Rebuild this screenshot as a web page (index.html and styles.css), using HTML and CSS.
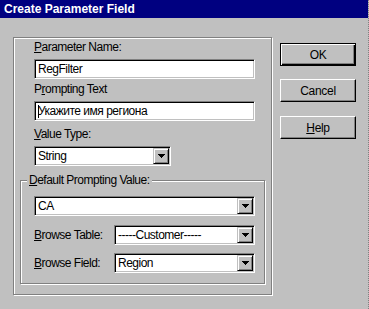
FILE: index.html
```html
<!DOCTYPE html>
<html lang="en">
<head>
  <meta charset="UTF-8" />
  <title>Create Parameter Field</title>
  <link rel="stylesheet" href="styles.css">
</head>
<body>
  <div class="window">
    <div class="titlebar">Create Parameter Field</div>

    <div class="dialog">
      <div class="frame">
        <div class="fields">
          <div class="label"><u>P</u>arameter Name:</div>
          <div class="textbox">RegFilter</div>

          <div class="label label-2">P<u>r</u>ompting Text</div>
          <div class="textbox"><span class="caret"></span>Укажите имя региона</div>

          <div class="label label-3"><u>V</u>alue Type:</div>
          <div class="combo combo-type">
            <span class="combo-value">String</span>
            <span class="combo-btn">
              <svg class="arrow" viewBox="0 0 7 4" width="7" height="4"><path d="M0 0h7v1H0zM1 1h5v1H1zM2 2h3v1H2zM3 3h1v1H3z"/></svg>
            </span>
          </div>
        </div>

        <!-- Default Prompting Value -->
        <div class="group">
          <div class="group-title"><u>D</u>efault Prompting Value:</div>

          <div class="combo combo-default">
            <span class="combo-value">CA</span>
            <span class="combo-btn">
              <svg class="arrow" viewBox="0 0 7 4" width="7" height="4"><path d="M0 0h7v1H0zM1 1h5v1H1zM2 2h3v1H2zM3 3h1v1H3z"/></svg>
            </span>
          </div>

          <div class="browse-row browse-table">
            <span class="browse-label"><u>B</u>rowse Table:</span>
            <div class="combo combo-browse">
              <span class="combo-value">-----Customer-----</span>
              <span class="combo-btn">
                <svg class="arrow" viewBox="0 0 7 4" width="7" height="4"><path d="M0 0h7v1H0zM1 1h5v1H1zM2 2h3v1H2zM3 3h1v1H3z"/></svg>
              </span>
            </div>
          </div>

          <div class="browse-row browse-field">
            <span class="browse-label"><u>B</u>rowse Field:</span>
            <div class="combo combo-browse">
              <span class="combo-value">Region</span>
              <span class="combo-btn">
                <svg class="arrow" viewBox="0 0 7 4" width="7" height="4"><path d="M0 0h7v1H0zM1 1h5v1H1zM2 2h3v1H2zM3 3h1v1H3z"/></svg>
              </span>
            </div>
          </div>
        </div>
      </div>

      <div class="buttons">
        <button class="btn btn-default">OK</button>
        <button class="btn">Cancel</button>
        <button class="btn btn-help"><u>H</u>elp</button>
      </div>
    </div>
  </div>
</body>
</html>
```

FILE: styles.css
```css
:root {
  --face: #c0c0c0;
  --shadow: #808080;
  --light: #ffffff;
  --dark: #000000;
  --title: #000080;
  --font-ui: "Liberation Sans", Arial, sans-serif;
}

* {
  margin: 0;
  padding: 0;
  box-sizing: border-box;
}

body {
  background: var(--face);
  font-family: var(--font-ui);
  font-size: 12px;
  letter-spacing: -0.5px;
  color: var(--dark);
  width: 369px;
  height: 309px;
  overflow: hidden;
}

.window {
  height: 309px;
  border-right: 1px dotted var(--shadow);
}

.titlebar {
  height: 18px;
  background: var(--title);
  color: white;
  font: bold 12px "Liberation Sans", Arial, sans-serif;
  letter-spacing: 0;
  line-height: 18px;
  padding-left: 4px;
}

.dialog {
  display: flex;
  align-items: flex-start;
  padding: 19px 0 0 13px;
}

/* etched frame */
.frame {
  width: 259px;
  height: 258px;
  border: 1px solid var(--shadow);
  box-shadow: inset 1px 1px var(--light), 1px 1px var(--light);
  padding-left: 6px;
}

.fields {
  padding-left: 14px;
}

.label {
  height: 21px;
  line-height: 16px;
  padding-top: 1px;
}

.label-2 {
  margin-top: 1px;
}

.label-3 {
  margin-top: 4px;
}

/* sunken fields */
.textbox,
.combo {
  height: 20px;
  background: white;
  border: 1px solid;
  border-color: var(--shadow) var(--light) var(--light) var(--shadow);
  box-shadow: inset 1px 1px var(--dark), inset -1px -1px var(--face);
}

.textbox {
  width: 221px;
  line-height: 18px;
  padding-left: 3px;
  white-space: nowrap;
}

.caret {
  display: inline-block;
  width: 1px;
  height: 13px;
  background: var(--dark);
  vertical-align: -3px;
  margin-right: -1px;
}

.combo {
  display: flex;
  padding: 1px;
}

.combo-value {
  flex: 1;
  line-height: 16px;
  padding-left: 2px;
  white-space: nowrap;
  overflow: hidden;
}

.combo-btn {
  width: 16px;
  height: 16px;
  background: var(--face);
  border: 1px solid;
  border-color: var(--face) var(--dark) var(--dark) var(--face);
  box-shadow: inset 1px 1px var(--light), inset -1px -1px var(--shadow);
  display: flex;
  align-items: center;
  justify-content: center;
}

.arrow {
  display: block;
  fill: var(--dark);
  shape-rendering: crispEdges;
}

.combo-type {
  width: 137px;
}

/* group box */
.group {
  position: relative;
  width: 245px;
  height: 104px;
  margin-top: 14px;
  border: 1px solid var(--shadow);
  box-shadow: inset 1px 1px var(--light), 1px 1px var(--light);
  padding: 15px 0 0 13px;
}

.group-title {
  position: absolute;
  top: -9px;
  left: 6px;
  padding: 0 2px;
  line-height: 16px;
  background: var(--face);
}

.combo-default {
  width: 221px;
}

.browse-row {
  display: flex;
  align-items: center;
}

.browse-table {
  margin-top: 9px;
}

.browse-field {
  margin-top: 8px;
}

.browse-label {
  width: 80px;
}

.combo-browse {
  width: 141px;
}

/* buttons */
.buttons {
  display: flex;
  flex-direction: column;
  gap: 13px;
  margin: 6px 0 0 8px;
}

.btn {
  width: 76px;
  height: 23px;
  background: var(--face);
  font-family: var(--font-ui);
  font-size: 12px;
  letter-spacing: -0.3px;
  color: var(--dark);
  border: 1px solid;
  border-color: var(--light) var(--dark) var(--dark) var(--light);
  box-shadow: inset -1px -1px var(--shadow);
}

.btn-default {
  border-color: var(--dark);
  box-shadow: inset 1px 1px var(--light), inset -1px -1px var(--dark), inset -2px -2px var(--shadow);
}

.btn-help {
  margin-top: 1px;
}
```
